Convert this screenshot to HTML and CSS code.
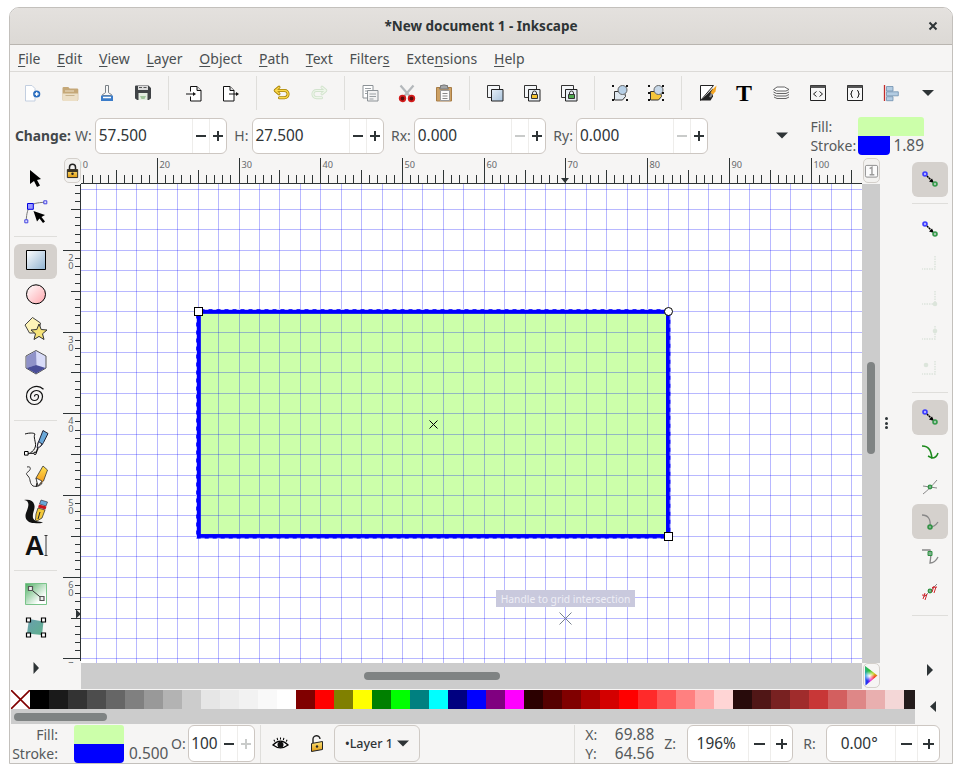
FILE: index.html
```html
<!DOCTYPE html>
<html lang="en">
<head>
<meta charset="utf-8">
<title>Inkscape</title>
<link rel="stylesheet" href="styles.css">
</head>
<body>
<svg class="defs" aria-hidden="true">
  <defs>
    <linearGradient id="gRect" x1="0" y1="0" x2="1" y2="1"><stop offset="0" stop-color="#fff"/><stop offset="1" stop-color="#8fb2d0"/></linearGradient>
    <linearGradient id="gBall" x1="0" y1="0" x2="1" y2="1"><stop offset="0" stop-color="#fff"/><stop offset="1" stop-color="#ffa6ad"/></linearGradient>
    <linearGradient id="gBlue" x1="0" y1="0" x2="1" y2="1"><stop offset="0" stop-color="#e6eef6"/><stop offset="1" stop-color="#a9c3dc"/></linearGradient>
    <linearGradient id="gGreen" x1="0" y1="0" x2="1" y2="1"><stop offset="0" stop-color="#4fae63"/><stop offset=".75" stop-color="#fff"/><stop offset="1" stop-color="#fff"/></linearGradient>
    <linearGradient id="gMesh" x1="0" y1="0" x2="1" y2="1"><stop offset="0" stop-color="#6a9fb0"/><stop offset="1" stop-color="#5fb08c"/></linearGradient>
    <linearGradient id="gGold" x1="0" y1="0" x2="0" y2="1"><stop offset="0" stop-color="#fbe27a"/><stop offset="1" stop-color="#e09a10"/></linearGradient>
    <linearGradient id="gPen" x1="0" y1="0" x2="0" y2="1"><stop offset="0" stop-color="#ffe14f"/><stop offset="1" stop-color="#f08a10"/></linearGradient>
  </defs>
</svg>
<div class="window">
  <header class="titlebar">
    <span class="title">*New document 1 - Inkscape</span>
    <svg class="close" viewBox="0 0 10 10"><path d="M1.5 1.5l7 7M8.5 1.5l-7 7"/></svg>
  </header>
  <nav class="menubar">
    <span class="mi"><u>F</u>ile</span>
    <span class="mi"><u>E</u>dit</span>
    <span class="mi"><u>V</u>iew</span>
    <span class="mi"><u>L</u>ayer</span>
    <span class="mi"><u>O</u>bject</span>
    <span class="mi"><u>P</u>ath</span>
    <span class="mi"><u>T</u>ext</span>
    <span class="mi">Filter<u>s</u></span>
    <span class="mi">Exte<u>n</u>sions</span>
    <span class="mi"><u>H</u>elp</span>
  </nav>
  <div class="toolbar">
    <span class="tb"><svg class="i" viewBox="0 0 20 20"><path d="M2.5 2.5h6.5l3 3v12.5h-9.5z" fill="#fff" stroke="#c3cfe0"/><circle cx="13.7" cy="11" r="3.6" fill="#2a6dbf"/><path d="M11.8 11h3.8M13.7 9.1v3.8" stroke="#fff" stroke-width="1.3"/></svg></span>
    <span class="tb"><svg class="i" viewBox="0 0 20 20"><path d="M2.5 5.2q0-1.2 1.2-1.2h4.6l1.4 1.4h7.4q1.2 0 1.2 1.2v9.9q0 1.2-1.2 1.2h-13.4q-1.2 0-1.2-1.2z" fill="#c5a878"/><path d="M2.5 10.5h15.4v6.3q0 1.2-1.2 1.2h-13q-1.2 0-1.2-1.2z" fill="#ecdfc6"/><path d="M5 8h9" stroke="#ecdfc6"/><path d="M5.5 12.5h9" stroke="#c9b48e"/></svg></span>
    <span class="tb"><svg class="i" viewBox="0 0 20 20"><path d="M8.5 2.500h3v6.500q0 1 1 1.500l2 1v1h-9v-1l2-1q1-.5 1-1.500z" fill="#f7f7f7" stroke="#7a8086"/><path d="M4 12.500h12v5.500h-12z" fill="#3b7cc9"/><path d="M6 14.500h8" stroke="#fff" stroke-width="1.600"/></svg></span>
    <span class="tb"><svg class="i" viewBox="0 0 20 20"><path d="M3 2.500q-1 0-1 1v11.500q0 1 1 1l1 1h12l1-1q1 0 1-1v-10l-2.500-2.500z" fill="#404346"/><path d="M5 3h10v4h-10z" fill="#dcdcdc"/><path d="M6 4.500h3M10.500 4.500h3" stroke="#555" stroke-width="1"/><path d="M5.500 10h9v7h-9z" fill="#e3ece0"/><path d="M7 13h6l-1.500 3h-3z" fill="#9fc39a"/></svg></span>
    <span class="tsep"></span>
    <span class="tb"><svg class="i" viewBox="0 0 20 20"><path d="M6.500 8.500v-5h6.500l4 4v10.500h-10.500v-4.500" fill="#fff" stroke="#111"/><path d="M13 3.500v4h4" fill="#ddd" stroke="#111"/><path d="M2 11h8" stroke="#111" stroke-width="1.200"/><path d="M9 9l3 2-3 2z" fill="#111"/></svg></span>
    <span class="tb"><svg class="i" viewBox="0 0 20 20"><path d="M2.500 3.500h6.500l4 4v10.500h-10.500z" fill="#fff" stroke="#111"/><path d="M9 3.500v4h4" fill="#ddd" stroke="#111"/><path d="M8 11h8" stroke="#111" stroke-width="1.200"/><path d="M15 9l3 2-3 2z" fill="#111"/></svg></span>
    <span class="tsep"></span>
    <span class="tb"><svg class="i" viewBox="0 0 20 20"><path d="M3.500 7.500h9a3.600 3.600 0 0 1 0 7.200h-5M7 4.200l-3.800 3.300 3.800 3.300" fill="none" stroke="#a57f00" stroke-width="3" stroke-linejoin="round" stroke-linecap="round"/><path d="M3.500 7.500h9a3.600 3.600 0 0 1 0 7.200h-5M7 4.200l-3.800 3.300 3.800 3.300" fill="none" stroke="#fbd94c" stroke-width="1.400" stroke-linejoin="round" stroke-linecap="round"/></svg></span>
    <span class="tb"><svg class="i" viewBox="0 0 20 20"><path d="M16.500 7.500h-9a3.600 3.600 0 0 0 0 7.200h5M13 4.200l3.800 3.300-3.800 3.300" fill="none" stroke="#d2e3cd" stroke-width="3" stroke-linejoin="round" stroke-linecap="round"/><path d="M16.500 7.500h-9a3.600 3.600 0 0 0 0 7.200h5M13 4.200l3.800 3.300-3.800 3.300" fill="none" stroke="#eef6ea" stroke-width="1.200" stroke-linejoin="round" stroke-linecap="round"/></svg></span>
    <span class="tsep"></span>
    <span class="tb"><svg class="i" viewBox="0 0 20 20"><path d="M3 2.500h10v12.500h-10z" fill="#fff" stroke="#8c9296"/><path d="M5 5.500h6M5 8h6M5 10.500h6" stroke="#9aa0a4"/><path d="M7.500 7.500h10.500v10.500h-10.500z" fill="#f2f2f2" stroke="#8c9296"/><path d="M9.500 11h6.500M9.500 13.500h6.500M9.500 16h4" stroke="#9aa0a4"/></svg></span>
    <span class="tb"><svg class="i" viewBox="0 0 20 20"><path d="M3.500 2.500l9.500 11M16.500 2.500l-9.500 11" stroke="#b4b8bb" stroke-width="2.200" fill="none"/><circle cx="5.500" cy="15.500" r="2.800" fill="#5a0c0c" stroke="#d31b1b" stroke-width="1.800"/><circle cx="14.500" cy="15.500" r="2.800" fill="#5a0c0c" stroke="#d31b1b" stroke-width="1.800"/></svg></span>
    <span class="tb"><svg class="i" viewBox="0 0 20 20"><path d="M2.500 4.500h15v13.500h-15z" fill="#cda164" stroke="#a77c46"/><path d="M6.500 4.500v-2h2v-.5h3v.5h2v2l1 1.500h-9z" fill="#a3a6a8" stroke="#777"/><path d="M6.500 7.500h9v10h-9z" fill="#fbfbfb" stroke="#9a9a9a"/><path d="M8.500 10.500h5M8.500 13h5M8.500 15.500h5" stroke="#888"/></svg></span>
    <span class="tsep"></span>
    <span class="tb"><svg class="i" viewBox="0 0 20 20"><path d="M2.500 2.500h12v12h-12z" fill="#f4f6f8" stroke="#333"/><path d="M6.500 6.500h11.500v11.500h-11.500z" fill="url(#gBlue)" stroke="#222"/></svg></span>
    <span class="tb"><svg class="i" viewBox="0 0 20 20"><path d="M2.500 2.500h12v12h-12z" fill="#f4f6f8" stroke="#333"/><path d="M6.500 6.500h11.500v11.500h-11.500z" fill="#e8eef4" stroke="#222"/><path d="M10.500 11.500v-1.500a2 2 0 0 1 4 0v1.500" fill="none" stroke="#333"/><path d="M9.500 11.500h6v4h-6z" fill="#f2c230" stroke="#333"/></svg></span>
    <span class="tb"><svg class="i" viewBox="0 0 20 20"><path d="M2.500 2.500h12v12h-12z" fill="#f4f6f8" stroke="#333"/><path d="M6.500 6.500h11.500v11.500h-11.500z" fill="#e8eef4" stroke="#222"/><path d="M10.500 11.500v-1.500a2 2 0 0 1 4 0v1.500" fill="none" stroke="#333"/><path d="M9.500 11.500h6v4h-6z" fill="#4ea84e" stroke="#333"/></svg></span>
    <span class="tsep"></span>
    <span class="tb"><svg class="i" viewBox="0 0 20 20"><path d="M4.500 8.500h10l1 5-3 3.500h-8z" fill="#dfe8f0" stroke="#333"/><circle cx="12.500" cy="7" r="4.500" fill="#b6cfe6" stroke="#666"/><path d="M2 2h2v2h-2zM16 2h2v2h-2zM2 16h2v2h-2zM16 16h2v2h-2z" fill="#111"/></svg></span>
    <span class="tb"><svg class="i" viewBox="0 0 20 20"><path d="M4.500 8.500h10l1 5-3 3.500h-8z" fill="#f4c63a" stroke="#333"/><circle cx="12.500" cy="7" r="4.500" fill="#c7d8e8" stroke="#666"/><path d="M2 2h2v2h-2zM16 2h2v2h-2zM2 16h2v2h-2zM16 16h2v2h-2zM2 9h2v2h-2zM16 9h2v2h-2z" fill="#111"/></svg></span>
    <span class="tsep"></span>
    <span class="tb"><svg class="i" viewBox="0 0 20 20"><path d="M2.500 2.500h13l-13 15z" fill="#fff" stroke="#222"/><path d="M15 5.500v8l-2.500 4h-10z" fill="#222"/><path d="M14 7l4.500-4.500-1 6-3 3.500-2-2z" fill="#f5a623"/><path d="M11 14l2-4 2 1.500-2 3z" fill="#888"/></svg></span>
    <span class="tb"><svg class="i" viewBox="0 0 20 20"><text class="tbig" x="10" y="17.800" text-anchor="middle">T</text></svg></span>
    <span class="tb"><svg class="i" viewBox="0 0 20 20"><path d="M2.500 6.500l3.500-2.500h7.500l4.500 2.500-3 1.500h-9.500z" fill="#fff" stroke="#555" stroke-width=".9"/><path d="M2.500 9l3 1.500h9.500l3-1.500M2.500 11.500l3 1.500h9.500l3-1.500M3 14l3 1.500h9l3-1.500" fill="none" stroke="#555" stroke-width=".9"/></svg></span>
    <span class="tb"><svg class="i" viewBox="0 0 20 20"><path d="M2.500 2.500h15v15h-15z" fill="#f7f7f7" stroke="#222"/><path d="M2.500 2.500h15v2.500h-15z" fill="#555"/><path d="M8.500 8.500l-3 2.500 3 2.500M11.500 8.500l3 2.500-3 2.500" fill="none" stroke="#222"/></svg></span>
    <span class="tb"><svg class="i" viewBox="0 0 20 20"><path d="M2.500 2.500h15v15h-15z" fill="#f7f7f7" stroke="#222"/><path d="M2.500 2.500h15v2.500h-15z" fill="#555"/><path d="M8 7.500q-1.500 0-1.500 1.500v1q0 1-1 1 1 0 1 1v1q0 1.500 1.500 1.500M12 7.500q1.500 0 1.500 1.500v1q0 1 1 1-1 0-1 1v1q0 1.500-1.500 1.500" fill="none" stroke="#222"/></svg></span>
    <span class="tb"><svg class="i" viewBox="0 0 20 20"><path d="M2.500 2v16" stroke="#c12a2a" stroke-width="1.300"/><path d="M4.500 3.500h6.500v4.500h-6.500zM4.500 8.800h11.800v4h-11.800zM4.500 13.700h6.500v4h-6.500z" fill="#b3cce2" stroke="#6f8fae" stroke-width=".8"/></svg></span>
    <span class="tb"><svg class="i" viewBox="0 0 20 20"><path d="M4 7h12l-6 6z" fill="#2e3436"/></svg></span>
  </div>
  <div class="controls">
    <b class="change">Change:</b>
    <span class="lab first">W:</span>
    <span class="spin"><span class="val">57.500</span><span class="b m"></span><span class="b p"></span></span>
    <span class="lab">H:</span>
    <span class="spin"><span class="val">27.500</span><span class="b m"></span><span class="b p"></span></span>
    <span class="lab">Rx:</span>
    <span class="spin"><span class="val">0.000</span><span class="b m off"></span><span class="b p"></span></span>
    <span class="lab">Ry:</span>
    <span class="spin"><span class="val">0.000</span><span class="b m off"></span><span class="b p"></span></span>
    <svg class="more" viewBox="0 0 12 7"><path d="M0 .5h12l-6 6z" fill="#2e3436"/></svg>
    <div class="style">
      <span class="lab0">Fill:</span><span class="sw-fill wide"></span>
      <span class="lab0">Stroke:</span><span class="sw-stroke"></span><span class="num">1.89</span>
    </div>
  </div>
  <div class="main">
    <aside class="lefttools">
      <span class="t"><svg viewBox="0 0 32 32"><path d="M10 8v14l4-3 3 6 3-1.500-3-5.500 4-1z" fill="#000"/></svg></span>
      <span class="t"><svg viewBox="0 0 32 32"><path d="M6.300 25c0-8 2-13 4-15s6-3.500 15-3.700" fill="none" stroke="#777"/><path d="M7.500 7.500h5.800v5.800h-5.800z" fill="#9a9aff" stroke="#0000e0"/><path d="M23.800 4.800h3v3h-3zM4.800 23.800h3v3h-3z" fill="#e4e4ff" stroke="#4444e0"/><path d="M13.500 15l11.500 4-3.500 2 3.500 4.500-2 1.500-3.500-4.500-2.500 3z" fill="#000"/></svg></span>
      <span class="sep wide"></span>
      <span class="t on"><svg viewBox="0 0 32 32"><path d="M6.500 5.500h19v19h-19z" fill="url(#gRect)" stroke="#000"/></svg></span>
      <span class="t"><svg viewBox="0 0 32 32"><circle cx="16" cy="14.300" r="9.500" fill="url(#gBall)" stroke="#000"/></svg></span>
      <span class="t"><svg viewBox="0 0 32 32"><g transform="translate(0 -1)"><path d="M12.500 4.500l8 5.500-2 10h-9l-4.500-8z" fill="#fdf3b8" stroke="#444"/><path d="M19 11l2.200 5.500 5.800.5-4.500 3.800 1.500 5.700-5-3.100-5 3.100 1.500-5.700-4.500-3.800 5.800-.5z" fill="#f6e378" stroke="#333"/></g></svg></span>
      <span class="t"><svg viewBox="0 0 32 32"><g transform="translate(0 -2)"><path d="M16 4.500l10 5.500v12l-10 6-10-6v-12z" fill="#d8dbf8" stroke="#555"/><path d="M6.500 10.500l9.500-5.500 .5 14-10 3z" fill="#8f92c8"/><path d="M6.500 22l9.500-3 9.500 3-9.500 5.500z" fill="#4a4e98"/></g></svg></span>
      <span class="t"><svg viewBox="0 0 32 32"><g transform="translate(0 -1.500)"><path d="M14.500 16a2 2 0 0 1 4 0 4 4 0 0 1-8 0 6 6 0 0 1 12 0 8 8 0 0 1-16 0 10 10 0 0 1 17-7.200" fill="none" stroke="#111" stroke-width="1.200"/></g></svg></span>
      <span class="sep"></span>
      <span class="t"><svg viewBox="0 0 32 32"><path d="M5 7c5-1.500 9-1 10 0-2 3 1 8 .5 12-.5 3-3 6-5 6.500" fill="none" stroke="#111"/><path d="M23 3.500l5 3-4.500 9-2 3-3 1-1-1.500 1-3z" fill="#6aa8d8" stroke="#223"/><path d="M18.500 14.500l3.500 2.500-2 3-3 .5z" fill="#eee" stroke="#223"/><path d="M18 21l-2 5" stroke="#111" stroke-width="1.400"/><path d="M4.500 24.500h3.600v3.600h-3.600z" fill="#fff" stroke="#000"/><path d="M8 26.300h6" stroke="#000"/><circle cx="15" cy="26.300" r="1.200" fill="#fff" stroke="#000"/></svg></span>
      <span class="t"><svg viewBox="0 0 32 32"><path d="M7 5c4-1 4 2 2 4s-4 2-1 5 1 7 5 10c3 1 8 0 9-3" fill="none" stroke="#333"/><path d="M23 4l4.500 4-4 11-5.500 5-2-8z" fill="url(#gPen)" stroke="#333" stroke-width=".8"/><path d="M16 16l6 3-4 5z" fill="#fff" stroke="#333" stroke-width=".8"/><path d="M17 21l-1 4" stroke="#111"/></svg></span>
      <span class="t"><svg viewBox="0 0 32 32"><path d="M4 4c7 1 4 8 2 13-2 6 2 10 8 10 3 0 7 1 9-1-4 0-9-1-10-4-1-6 3-9 1-14-1-3-4-5-10-4z" fill="#111"/><path d="M21 4l6.500 2-1.500 4-6.500-2z" fill="#6aa8d8" stroke="#223" stroke-width=".6"/><path d="M19 8.500l7.500 2-1 3-7.500-2z" fill="#c8141c"/><path d="M18 12l7 2-3 8-5 3-1.500-1 .5-6z" fill="#f2c83a" stroke="#222" stroke-width=".7"/><path d="M20 16l-2 7" stroke="#222"/></svg></span>
      <span class="t"><svg viewBox="0 0 32 32"><text class="abig" x="14.500" y="25" text-anchor="middle">A</text><path d="M24.500 5.500h3M26 6v19M24.500 25.500h3" stroke="#222" fill="none" stroke-width=".9"/></svg></span>
      <span class="sep tail"></span>
      <span class="t"><svg viewBox="0 0 32 32"><path d="M5.500 6.500h21v21h-21z" fill="url(#gGreen)" stroke="#7ac48a"/><path d="M10 11.500l12 10" stroke="#333"/><path d="M8.500 9.500h4v4h-4zM20 19.500h4v4h-4z" fill="#eee" stroke="#555" stroke-width="1.200"/></svg></span>
      <span class="t"><svg viewBox="0 0 32 32"><path d="M9 8l14.500 2.500-1.500 13.500-15-1.500z" fill="url(#gMesh)"/><path d="M6.500 7h4v4h-4zM21.500 7h4v4h-4zM6.500 22h4v4h-4zM21.500 22h4v4h-4z" fill="#fff" stroke="#000" stroke-width="1.200"/></svg></span>
      <span class="t end"><svg viewBox="0 0 32 32"><path d="M13.500 10l5.500 6-5.500 6z" fill="#2e3436"/></svg></span>
    </aside>
    <div class="area">
      <button class="corner"><svg viewBox="0 0 16 24"><path d="M4.800 11v-3a3.200 3.200 0 0 1 6.400 0v3" fill="none" stroke="#222" stroke-width="1.600"/><path d="M2.500 10.500h11v8.500h-11z" fill="url(#gGold)" stroke="#222"/><path d="M2.500 10.500h11v2.500h-11z" fill="#3a3324"/><circle cx="8" cy="15" r="1.300" fill="#222"/></svg></button>
      <svg id="rt" class="ruler" viewBox="81 158 781 26"></svg>
      <button class="corner right"><svg viewBox="0 0 16 16"><path d="M3 2h10q1.500 0 1.500 1.500v9.500q0 1.500-1.500 1.500h-10q-1.500 0-1.500-1.500v-9.500q0-1.500 1.500-1.500z" fill="#fbfbfb" stroke="#8a8a8a"/><path d="M6 5.500l2.500-1.500v8M6 12h5" fill="none" stroke="#9a9a9a" stroke-width="1.500"/></svg></button>
      <svg id="rl" class="ruler" viewBox="63 184 18 479"></svg>
      <div class="canvas">
        <svg class="art" viewBox="81 184 781 479">
          <rect x="198.500" y="311.500" width="469.700" height="224.800" fill="#ccffaa" stroke="#0000ff" stroke-width="4.200"/>
          <path class="grid" d="M96.500 184V663M116.500 184V663M136.500 184V663M157.500 184V663M177.500 184V663M198.500 184V663M218.500 184V663M239.500 184V663M259.500 184V663M279.500 184V663M300.500 184V663M320.500 184V663M341.500 184V663M361.500 184V663M382.500 184V663M402.500 184V663M422.500 184V663M443.500 184V663M463.500 184V663M484.500 184V663M504.500 184V663M525.500 184V663M545.500 184V663M565.500 184V663M586.500 184V663M606.500 184V663M627.500 184V663M647.500 184V663M668.500 184V663M688.500 184V663M708.500 184V663M729.500 184V663M749.500 184V663M770.500 184V663M790.500 184V663M811.500 184V663M831.500 184V663M851.500 184V663M81 189.500H862M81 209.500H862M81 229.500H862M81 250.500H862M81 270.500H862M81 291.500H862M81 311.500H862M81 332.500H862M81 352.500H862M81 372.500H862M81 393.500H862M81 413.500H862M81 434.500H862M81 454.500H862M81 475.500H862M81 495.500H862M81 515.500H862M81 536.500H862M81 556.500H862M81 577.500H862M81 597.500H862M81 618.500H862M81 638.500H862M81 658.500H862"/>
          <rect x="198.500" y="311.500" width="469.700" height="224.800" fill="none" stroke="#0000ff" stroke-width="4.200"/>
          <rect x="196.500" y="309.500" width="473.700" height="228.800" fill="none" stroke="#fff" stroke-opacity=".75" stroke-dasharray="4 4"/>
          <rect x="194.500" y="307.500" width="8" height="8" fill="#fff" stroke="#000"/>
          <rect x="664.500" y="532.500" width="8" height="8" fill="#fff" stroke="#000"/>
          <circle cx="668.500" cy="311.500" r="4" fill="#fff" stroke="#000"/>
          <path d="M429.500 420.500l8 8M437.500 420.500l-8 8" stroke="#000" fill="none"/>
          <rect x="496" y="590" width="139" height="17" fill="#c9c9dd"/>
          <text class="tip" x="565.500" y="603" text-anchor="middle">Handle to grid intersection</text>
          <path d="M559.500 612.500l12 12M571.500 612.500l-12 12" stroke="#77808c" fill="none"/>
        </svg>
      </div>
      <div class="vscroll"><span class="vthumb"></span></div>
      <span class="blank"></span>
      <div class="hscroll"><span class="hthumb"></span></div>
      <button class="corner wheelbtn"><span class="wheel"></span></button>
    </div>
    <div class="dots"><span></span><span></span><span></span></div>
    <aside class="righttools">
      <span class="r on"><svg viewBox="0 0 36 34"><use href="#snapA"/></svg></span>
      <span class="sep"></span>
      <span class="r"><svg viewBox="0 0 36 34"><g id="snapA"><circle cx="13" cy="12" r="2" fill="#b0b0ff" stroke="#3a3aff" stroke-width="1.600"/><path d="M15 14l5 5" stroke="#000" stroke-width="1.500" stroke-dasharray="2 .6"/><path d="M22 21l-5-1.500 3-3z" fill="#000"/><circle cx="23" cy="22" r="2" fill="#a6cbb0" stroke="#359a4a" stroke-width="1.600"/></g></svg></span>
      <span class="r"><svg viewBox="0 0 36 34"><path class="dotl" d="M23 10v13H10"/></svg></span>
      <span class="r"><svg viewBox="0 0 36 34"><path class="dotl" d="M23 10v13H10"/><circle cx="23" cy="23" r="2.300" fill="#dce5db"/></svg></span>
      <span class="r"><svg viewBox="0 0 36 34"><path class="dotl" d="M23 10v13H10"/><circle cx="23" cy="15" r="2.300" fill="#dce5db"/></svg></span>
      <span class="r"><svg viewBox="0 0 36 34"><path class="dotl" d="M23 10v13H10"/><circle cx="14" cy="14" r="2.300" fill="#dce5db"/></svg></span>
      <span class="sep"></span>
      <span class="r on"><svg viewBox="0 0 36 34"><use href="#snapA"/></svg></span>
      <span class="r"><svg viewBox="0 0 36 34"><path d="M10 11c8 0 9 6 10 12 4 0 5-2 6-5" fill="none" stroke="#1d8a1d" stroke-width="1.500"/><path d="M16 21l4 2" stroke="#1d8a1d" stroke-width="1.500"/></svg></span>
      <span class="r"><svg viewBox="0 0 36 34"><path d="M11 24c4-3 9-8 14-14M11 16l14 2" fill="none" stroke="#888"/><circle cx="18" cy="17" r="1.800" fill="#7cb48c" stroke="#2f9142" stroke-width="1.300"/></svg></span>
      <span class="r on"><svg viewBox="0 0 36 34"><path d="M10 10c6 0 9 4 8 12M18 22c4 0 6-2 8-5" fill="none" stroke="#888" stroke-width="1.300"/><circle cx="18" cy="22" r="2" fill="#7cb48c" stroke="#2f9142" stroke-width="1.500"/></svg></span>
      <span class="r"><svg viewBox="0 0 36 34"><path d="M10 11h8c1 5 1 9 0 13 4 0 6-2 8-6" fill="none" stroke="#888" stroke-width="1.300"/><path d="M16 12.500h4v4h-4z" fill="#7cb48c" stroke="#2f9142"/></svg></span>
      <span class="r"><svg viewBox="0 0 36 34"><path d="M11 24l14-14" stroke="#888"/><circle cx="18" cy="17" r="1.800" fill="#7cb48c" stroke="#2f9142" stroke-width="1.300"/><path d="M13 19l-2 6M15 20l-2 6M10 21l5 .5M22 12l-2 6M24 13l-2 6M20 13.500l5-.5" fill="none" stroke="#d0282e"/></svg></span>
      <span class="sep"></span>
      <span class="r end"><svg viewBox="0 0 36 34"><path d="M15 11l6 6-6 6z" fill="#2e3436"/></svg></span>
    </aside>
  </div>
  <div class="palbar">
    <div class="palcol">
      <div class="swatches">
        <svg class="none" viewBox="0 0 19 19"><rect width="19" height="19" fill="#fff"/><path d="M0 0l19 19M19 0l-19 19" stroke="#800000" stroke-width="1.600"/></svg>
        <i class="c" style="background:#000000"></i><i class="c" style="background:#1a1a1a"></i><i class="c" style="background:#333333"></i><i class="c" style="background:#4d4d4d"></i><i class="c" style="background:#666666"></i><i class="c" style="background:#808080"></i><i class="c" style="background:#999999"></i><i class="c" style="background:#b3b3b3"></i><i class="c" style="background:#cccccc"></i><i class="c" style="background:#e6e6e6"></i><i class="c" style="background:#ececec"></i><i class="c" style="background:#f2f2f2"></i><i class="c" style="background:#f9f9f9"></i><i class="c" style="background:#ffffff"></i><i class="c" style="background:#800000"></i><i class="c" style="background:#ff0000"></i><i class="c" style="background:#808000"></i><i class="c" style="background:#ffff00"></i><i class="c" style="background:#008000"></i><i class="c" style="background:#00ff00"></i><i class="c" style="background:#008080"></i><i class="c" style="background:#00ffff"></i><i class="c" style="background:#000080"></i><i class="c" style="background:#0000ff"></i><i class="c" style="background:#800080"></i><i class="c" style="background:#ff00ff"></i><i class="c" style="background:#2b0000"></i><i class="c" style="background:#550000"></i><i class="c" style="background:#800000"></i><i class="c" style="background:#aa0000"></i><i class="c" style="background:#d40000"></i><i class="c" style="background:#ff0000"></i><i class="c" style="background:#ff2a2a"></i><i class="c" style="background:#ff5555"></i><i class="c" style="background:#ff8080"></i><i class="c" style="background:#ffaaaa"></i><i class="c" style="background:#ffd5d5"></i><i class="c" style="background:#280b0b"></i><i class="c" style="background:#501616"></i><i class="c" style="background:#782121"></i><i class="c" style="background:#a02c2c"></i><i class="c" style="background:#c83737"></i><i class="c" style="background:#d35f5f"></i><i class="c" style="background:#de8787"></i><i class="c" style="background:#e9afaf"></i><i class="c" style="background:#f4d7d7"></i><i class="c" style="background:#241c1c"></i>
      </div>
      <div class="palscroll"><span class="pthumb"></span></div>
    </div>
    <svg class="palarrow" viewBox="0 0 6 11"><path d="M6 0v11l-6-5.500z" fill="#2e3436"/></svg>
  </div>
  <footer class="status">
    <div class="stylebox">
      <span class="lab1">Fill:</span><span class="sw-fill big"></span><span></span>
      <span class="lab1">Stroke:</span><span class="sw-stroke big"></span><span class="num">0.500</span>
    </div>
    <span class="lab o">O:</span>
    <span class="spin small"><span class="val">100</span><span class="b m"></span><span class="b p off"></span></span>
    <span class="vsep"></span>
    <svg class="eye" viewBox="0 0 18 14"><path d="M1 8q8-8 16 0-8 6-16 0z" fill="#fff" stroke="#000" stroke-width="1.300"/><circle cx="9" cy="7.800" r="3.200" fill="#111"/><path d="M3 4.500l-1-2M6 2.800l-.6-2.300M9 2.300v-2.300M12 2.800l.6-2.300M15 4.500l1-2" stroke="#000" stroke-width="1.100"/></svg>
    <svg class="padlock" viewBox="0 0 14 17"><path d="M3 8v-3.500a3.500 3.500 0 0 1 7-.5" fill="none" stroke="#222" stroke-width="1.400"/><path d="M1.500 8.500l11-2v8l-11 2z" fill="url(#gGold)" stroke="#222"/><circle cx="7" cy="11.500" r="1.200" fill="#222"/></svg>
    <button class="layer"><span>•Layer 1</span><svg viewBox="0 0 12 7"><path d="M0 .5h12l-6 6z" fill="#2e3436"/></svg></button>
    <span class="vsep coords-sep"></span>
    <div class="coords">
      <span class="lab1 l">X:</span><span class="num">69.88</span>
      <span class="lab1 l">Y:</span><span class="num">64.56</span>
    </div>
    <span class="lab z">Z:</span>
    <span class="spin wide zoom"><span class="val">196%</span><span class="b m"></span><span class="b p"></span></span>
    <span class="lab r2">R:</span>
    <span class="spin wide rot"><span class="val">0.00°</span><span class="b m"></span><span class="b p"></span></span>
  </footer>
</div>
<script src="script.js"></script>
</body>
</html>
```

FILE: styles.css
```css
* { box-sizing: border-box; }
html, body { margin: 0; height: 100%; background: #fff; overflow: hidden; }
body { font-family: "Noto Sans", "Open Sans", sans-serif; font-size: 14px; color: #2e3436; }
.defs { position: absolute; width: 0; height: 0; }

.window {
  width: 944px; height: 757px; margin: 7px 0 0 9px;
  border: 1px solid #c3c0bc; border-radius: 10px 10px 0 0;
  background: #f6f5f4; overflow: hidden;
  display: flex; flex-direction: column;
}

.titlebar {
  flex: none; height: 37px; display: flex; align-items: center; justify-content: center;
  background: linear-gradient(#e4e1de, #dcd9d5); border-bottom: 1px solid #b9b5b0; position: relative;
}
.title { font-weight: 700; font-size: 13.500px; color: #2e3436; }
.close { position: absolute; right: 14px; top: 13px; width: 10px; height: 10px; fill: none; stroke: #2e3436; stroke-width: 2; }

.menubar {
  flex: none; height: 27px; display: flex; align-items: center; padding: 0 0 0 8px;
  border-bottom: 1px solid #dcdad7; font-size: 14px; color: #4a4f51;
}
.mi { margin-right: 16.800px; }
.mi u { text-underline-offset: 2px; text-decoration-thickness: 1px; }

.toolbar { flex: none; height: 42px; display: flex; align-items: center; padding-left: 4.600px; }
.tb { flex: none; width: 36.800px; height: 34px; display: flex; align-items: center; justify-content: center; }
.i { width: 20px; height: 20px; display: block; overflow: visible; }
.tsep { flex: none; width: 14.300px; height: 34px; display: flex; justify-content: center; }
.tsep::before { content: ""; width: 1px; background: #dfdedb; }
.tbig { font-family: "Liberation Serif", serif; font-weight: 700; font-size: 24px; fill: #000; }
.abig { font-family: "Liberation Sans", sans-serif; font-weight: 700; font-size: 27px; fill: #111; }

.controls { flex: none; height: 44px; display: flex; align-items: flex-start; padding: 4px 0 0 5px; font-size: 14px; color: #55595b; position: relative; }
.change { font-weight: 700; width: 56px; line-height: 36px; font-size: 13.800px; color: #42474a; }
.lab { line-height: 36px; margin: 0 3.500px 0 7px; color: #55595b; white-space: nowrap; }
.lab.first { margin-left: 4px; }
.spin { flex: none; display: flex; width: 132px; height: 36px; background: #fff; border: 1px solid #cdc7c2; border-radius: 6px; overflow: hidden; color: #2e3436; }
.val { flex: 1; padding-left: 2.500px; font-size: 15.400px; line-height: 33px; }
.b { flex: none; width: 17px; border-left: 1px solid #eeedeb; position: relative; --bar: #2e3436; }
.b.off { --bar: #c9cbca; }
.b::before { content: ""; position: absolute; left: 3px; right: 3px; top: 50%; height: 2px; margin-top: -1px; background: var(--bar); }
.b.p::after { content: ""; position: absolute; top: 50%; left: 50%; width: 2px; height: 10px; margin: -5px 0 0 -1px; background: var(--bar); }
.more { flex: none; width: 12px; height: 7px; margin: 14px 0 0 68px; }
.style { position: relative; display: grid; grid-template-columns: 48px 32px 34px; grid-auto-rows: 19px; align-items: center; margin: -1px 0 0 22px; }
.lab0 { color: #55595b; }
.sw-fill { background: #ccffaa; height: 19px; border-radius: 3px 3px 0 0; display: block; }
.sw-fill.wide { grid-column: span 2; }
.sw-stroke { background: #0000ff; height: 19px; border-radius: 0 0 4px 4px; display: block; }
.num { font-size: 15.400px; color: #55595b; text-align: left; padding-left: 3px; line-height: 19px; }

.main { flex: none; height: 531px; display: flex; }
.lefttools { flex: none; width: 53px; padding: 3px 6px 4px 4px; display: flex; flex-direction: column; }
.t { flex: none; height: 34.200px; display: flex; align-items: center; justify-content: center; border-radius: 6px; }
.t svg { width: 32px; height: 32px; display: block; }
.t.on, .r.on { background: #d5d1cd; }
.t.end, .r.end { margin-top: auto; }
.sep { flex: none; height: 1px; background: #dfdedb; margin: 5px 0; }
.sep.wide { margin: 7px 0; }
.sep.tail { margin: 7px 0 5px; }

.area { flex: none; width: 817px; display: grid; grid-template-columns: 18px 781px 18px; grid-template-rows: 26px 479px 26px; }
.corner { padding: 0; margin: 0 .5px 1px; background: #f3f2f0; border: 1px solid #d4d0cb; border-radius: 5px; display: flex; align-items: center; justify-content: center; }
.corner svg { width: 16px; height: 24px; display: block; }
.corner.right svg { width: 16px; height: 16px; }
.ruler { display: block; width: 100%; height: 100%; overflow: hidden; }
.rtick { fill: none; stroke: #2e3436; stroke-width: 1; }
.rlabel { font-family: "Noto Sans", sans-serif; font-size: 9.200px; fill: #666a6c; }
.canvas { background: #fff; overflow: hidden; }
.art { display: block; width: 781px; height: 479px; }
.grid { fill: none; stroke: #0000ff; stroke-opacity: .28; stroke-width: 1; }
.tip { font-family: "Noto Sans", sans-serif; font-size: 10.300px; fill: #eeeef5; }
.vscroll { background: #ccc; padding: 178px 0 0 5px; }
.vthumb { display: block; width: 8px; height: 92px; border-radius: 4px; background: #7f8383; }
.hscroll { background: #ccc; padding: 9px 0 0 283px; }
.hthumb { display: block; width: 136px; height: 8px; border-radius: 4px; background: #7f8383; }
.wheelbtn { margin-top: 0; background: #f6f5f4; }
.wheel { display: block; width: 13px; height: 20px; background: radial-gradient(circle at 35% 50%, #fff 0, rgba(255,255,255,0) 40%), conic-gradient(from 0deg at 35% 50%, #30c030, #c8d820 60deg, #ff2020 110deg, #e020e0 170deg, #2030f0 200deg, #20a0e0 280deg, #30c030); clip-path: polygon(0 0, 100% 50%, 8% 100%); }

.dots { flex: none; width: 32px; display: flex; flex-direction: column; align-items: flex-start; padding: 259px 0 0 4.500px; gap: 1.700px; }
.dots span { width: 3px; height: 3px; border-radius: 50%; background: #2e3436; }
.righttools { flex: none; width: 40px; padding: 4px 4px 2px 0; display: flex; flex-direction: column; }
.r { flex: none; height: 34.800px; display: flex; align-items: center; justify-content: center; border-radius: 6px; }
.r svg { width: 36px; height: 34px; display: block; }
.righttools .sep { margin: 6.500px 0 7px; }
.dotl { fill: none; stroke: #dde3dc; stroke-width: 1.500; stroke-dasharray: 1.500 1; }

.palbar { flex: none; height: 35px; display: flex; padding-left: 1px; }
.palcol { flex: none; width: 904px; padding-top: 1px; }
.swatches { display: flex; height: 19px; overflow: hidden; }
.none { flex: none; width: 19px; height: 19px; display: block; }
.c { flex: none; width: 19px; height: 19px; display: block; }
.palscroll { height: 15px; background: #ccc; padding: 4px 0 0 3px; }
.pthumb { display: block; width: 93px; height: 8px; border-radius: 4px; background: #7f8383; }
.palarrow { flex: none; width: 6px; height: 11px; margin: 12px 0 0 15px; }

.status { flex: 1; display: flex; align-items: center; position: relative; }
.status .spin { height: 37px; }
.status .val { line-height: 35px; }
.stylebox { display: grid; grid-template-columns: 64px 50px 44px; grid-auto-rows: 19px; align-items: center; flex: none; width: 161px; }
.lab1 { color: #55595b; padding-right: 16px; text-align: right; line-height: 19px; }
.stylebox .num { padding-left: 5px; }
.sw-fill.big, .sw-stroke.big { height: 19px; }
.lab.o { margin: 0 2px 0 0; }
.small { width: 67px; }
.vsep { flex: none; width: 1px; height: 38px; background: #dfdedb; margin-left: 5px; }
.eye { flex: none; width: 17px; height: 14px; margin-left: 11px; }
.padlock { flex: none; width: 14px; height: 17px; margin-left: 21px; }
.layer { flex: none; width: 86.500px; height: 37px; margin-left: 10px; background: #f6f5f4; border: 1px solid #cfcac5; border-radius: 6px; display: flex; align-items: center; justify-content: center; gap: 4px; font-family: inherit; font-size: 12.500px; font-weight: 500; color: #2e3436; padding: 0; }
.layer svg { width: 12px; height: 7px; }
.coords-sep { margin-left: 154px; }
.coords { flex: none; display: grid; grid-template-columns: 29px 40px; grid-auto-rows: 19px; margin-left: 10px; width: 69px; }
.lab1.l { text-align: left; padding: 0; }
.coords .num { text-align: right; padding: 0; }
.lab.z { margin: 0 0 0 10px; width: 23px; }
.spin.wide .val { text-align: center; padding: 0 4px 0 0; }
.spin.wide .b { width: 22px; }
.spin.wide .b::before { left: 5px; right: 5px; }
.zoom { width: 106px; }
.rot { width: 114px; }
.lab.r2 { margin: 0 0 0 10px; width: 23px; }
```

FILE: script.js
```js
(function () {
  var NS = 'http://www.w3.org/2000/svg';
  function el(parent, name, attrs, text) {
    var e = document.createElementNS(NS, name);
    for (var k in attrs) e.setAttribute(k, attrs[k]);
    if (text) e.textContent = text;
    parent.appendChild(e);
    return e;
  }
  var rt = document.getElementById('rt');
  var d = 'M81 183.5H862';
  for (var u = 10; u <= 105; u++) {
    var x = Math.floor(157.4 + (u - 20) * 8.17) + 0.5;
    var h = u % 10 === 0 ? 25 : u % 5 === 0 ? 13 : 8;
    d += 'M' + x + ' 183V' + (183 - h);
    if (u % 10 === 0) el(rt, 'text', { 'class': 'rlabel', x: x + 2, y: 168 }, String(u));
  }
  el(rt, 'path', { 'class': 'rtick', d: d });
  el(rt, 'path', { d: 'M561 178h8l-4 5z', fill: '#2e3436' });

  var rl = document.getElementById('rl');
  d = 'M80.500 184V661';
  for (u = 10; u <= 70; u++) {
    var y = Math.floor(250.4 + (u - 20) * 8.17) + 0.5;
    if (y < 184 || y > 661) continue;
    var w = u % 10 === 0 ? 17 : u % 5 === 0 ? 9 : 5;
    d += 'M80 ' + y + 'H' + (80 - w);
    if (u % 10 === 0) {
      var s = String(u);
      var t = el(rl, 'text', { 'class': 'rlabel', 'text-anchor': 'middle' });
      el(t, 'tspan', { x: 71, y: y + 10 }, s[0]);
      el(t, 'tspan', { x: 71, y: y + 18 }, s[1]);
    }
  }
  el(rl, 'path', { 'class': 'rtick', d: d });
  el(rl, 'path', { d: 'M76 609.500l5 4.500-5 4.500z', fill: '#2e3436' });
})();
```
